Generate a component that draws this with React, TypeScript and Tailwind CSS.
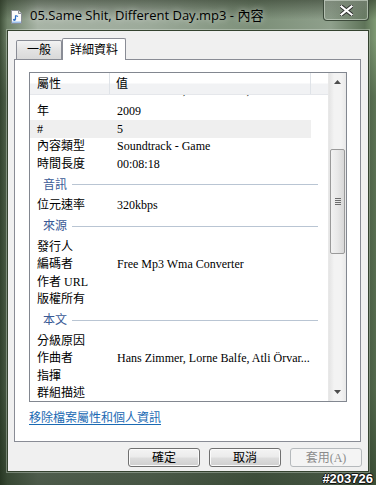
import React from 'react';

type Row = { label?: string; value?: string; section?: string; hl?: boolean; cut?: boolean };

const rows: Row[] = [
  { label: '參與演出者', value: 'Hans Zimmer, Lorne Balfe, Atli Örvar...', cut: true },
  { label: '年', value: '2009' },
  { label: '#', value: '5', hl: true },
  { label: '內容類型', value: 'Soundtrack - Game' },
  { label: '時間長度', value: '00:08:18' },
  { section: '音訊' },
  { label: '位元速率', value: '320kbps' },
  { section: '來源' },
  { label: '發行人' },
  { label: '編碼者', value: 'Free Mp3 Wma Converter' },
  { label: '作者 URL' },
  { label: '版權所有' },
  { section: '本文' },
  { label: '分級原因' },
  { label: '作曲者', value: 'Hans Zimmer, Lorne Balfe, Atli Örvar...' },
  { label: '指揮' },
  { label: '群組描述' },
];

const ui = "font-['Liberation_Serif','Noto_Sans_CJK_TC',serif]";

const FileIcon = () => (
  <svg width="11" height="14" viewBox="0 0 11 14">
    <path d="M0.5 0.5h7l3 3v10h-10z" fill="#fbfbfb" stroke="#8a8f96" />
    <path d="M7.5 0.5v3h3" fill="#e2e4e8" stroke="#8a8f96" />
    <path d="M4.5 5.5v4.2" stroke="#2d6fc4" strokeWidth="1.2" />
    <path d="M4.5 5.5l2.5 1" stroke="#2d6fc4" strokeWidth="1.2" />
    <ellipse cx="3.4" cy="9.8" rx="1.5" ry="1.1" fill="#2d6fc4" />
    <rect x="1" y="11.5" width="9" height="1.5" fill="#9cc0ea" />
  </svg>
);

const Button = ({ children, disabled }: { children: React.ReactNode; disabled?: boolean }) => (
  <div
    className={
      disabled
        ? 'w-[72px] h-[19px] rounded-[3px] border border-[#b5b9bc] bg-[#f4f4f4] flex items-center justify-center text-[12px] text-[#8b8b8b] leading-none'
        : 'w-[72px] h-[19px] rounded-[3px] border border-[#707070] bg-[linear-gradient(180deg,#f4f4f4_0%,#ebebeb_48%,#dddddd_52%,#cfcfcf_100%)] shadow-[inset_0_0_0_1px_#fbfbfb] flex items-center justify-center text-[12px] text-black leading-none'
    }
  >
    {children}
  </div>
);

const Scrollbar = () => (
  <div className="w-[18px] h-full flex flex-col bg-[linear-gradient(90deg,#e4e4e4,#f3f3f3_30%,#f3f3f3_70%,#e9e9e9)] border-l border-[#e8e8e8]">
    <div className="h-[18px] flex items-center justify-center">
      <svg width="7" height="4" viewBox="0 0 7 4"><path d="M0 4L3.5 0L7 4z" fill="#4d4d4d" /></svg>
    </div>
    <div className="h-[58px]" />
    <div className="h-[105px] mx-[1px] rounded-[2px] border border-[#9a9a9a] bg-[linear-gradient(90deg,#f2f2f2,#e8e8e8_50%,#d8d8d8)] flex flex-col items-center justify-center gap-[1px]">
      <div className="w-[6px] h-[1px] bg-[#6d6d6d]" />
      <div className="w-[6px] h-[1px] bg-[#6d6d6d]" />
      <div className="w-[6px] h-[1px] bg-[#6d6d6d]" />
      <div className="w-[6px] h-[1px] bg-[#6d6d6d]" />
    </div>
    <div className="flex-1" />
    <div className="h-[18px] flex items-center justify-center">
      <svg width="7" height="4" viewBox="0 0 7 4"><path d="M0 0L3.5 4L7 0z" fill="#4d4d4d" /></svg>
    </div>
  </div>
);

const ListView = () => (
  <div className="w-[318px] h-[330px] border border-[#828790] bg-white flex">
    <div className="w-[298px] flex flex-col overflow-hidden">
      <div className="h-[22px] shrink-0 flex bg-[linear-gradient(180deg,#ffffff_0%,#ffffff_48%,#f1f2f4_52%,#f1f2f4_100%)] border-b border-[#e5e7eb] text-[12px] text-black">
        <div className="w-[80px] pl-[7px] flex items-center border-r border-[#dfe3e8]">屬性</div>
        <div className="w-[201px] pl-[6px] flex items-center border-r border-[#dfe3e8]">值</div>
        <div className="flex-1" />
      </div>
      <div className="flex-1 overflow-hidden">
        <div className="-mt-[10px] flex flex-col">
          {rows.map((r, i) =>
            r.section ? (
              <div key={i} className="h-[24px] flex items-center pl-[13px] pr-[10px] gap-[5px]">
                <span className="text-[12px] text-[#3a5a96] leading-none">{r.section}</span>
                <div className="flex-1 h-[1px] bg-[#b9c5d3]" />
              </div>
            ) : (
              <div
                key={i}
                className={`h-[17.5px] w-[281px] flex text-[12px] text-black leading-none ${r.cut ? 'items-start' : 'items-center'} ${r.hl ? 'bg-[#efefef]' : ''}`}
              >
                <div className={`w-[80px] pl-[7px] whitespace-nowrap ${r.cut ? '-mt-[1px]' : ''}`}>{r.label}</div>
                <div className={`pl-[7px] whitespace-nowrap ${r.cut ? '-mt-[1px]' : ''}`}>{r.value}</div>
              </div>
            )
          )}
        </div>
      </div>
    </div>
    <Scrollbar />
  </div>
);

export default function App() {
  return (
    <div
      className={`w-[376px] h-[485px] relative overflow-hidden flex flex-col ${ui} bg-[linear-gradient(90deg,#3f5039_0%,#6f8269_2%,#a8b4a6_10%,#9caa9a_40%,#7c8f78_68%,#8fa08c_88%,#5f7459_97%,#7f9a73_100%)]`}
    >
      <div className="absolute inset-0 bg-[linear-gradient(180deg,rgba(40,50,35,0.55)_0%,rgba(140,155,138,0)_4%,rgba(0,0,0,0)_8%,rgba(30,45,28,0.35)_20%,rgba(30,45,28,0.45)_80%,rgba(25,40,22,0.65)_100%)]" />
      {/* title bar */}
      <div className="h-[30px] shrink-0 flex items-start relative">
        <div className="pl-[11px] pt-[10px]">
          <FileIcon />
        </div>
        <div className="pl-[8px] pt-[7px] text-[13px] text-black font-['Open_Sans','Noto_Sans_CJK_TC',sans-serif] leading-[16px] [text-shadow:0_0_6px_rgba(255,255,255,0.7)]">
          05.Same Shit, Different Day.mp3 - 內容
        </div>
        <div className="flex-1" />
        <div className="w-[46px] h-[21px] mr-[7px] rounded-b-[4px] border border-t-0 border-[#3c4a3a] shadow-[inset_0_0_0_1px_rgba(220,230,218,0.55)] bg-[linear-gradient(180deg,rgba(200,210,198,0.35),rgba(120,135,118,0.3))] flex items-center justify-center">
          <svg width="13" height="11" viewBox="0 0 13 11">
            <path d="M1.5 1.5L11.5 9.5M11.5 1.5L1.5 9.5" stroke="#2b2b2b" strokeWidth="4" strokeLinecap="square" />
            <path d="M1.5 1.5L11.5 9.5M11.5 1.5L1.5 9.5" stroke="#ffffff" strokeWidth="2.2" strokeLinecap="square" />
          </svg>
        </div>
      </div>

      {/* client area */}
      <div className="mx-[7px] h-[442px] border border-[#34422f] bg-[#f0f0f0] shadow-[0_0_0_1px_rgba(230,238,228,0.35)] flex flex-col relative">
        <div className="pt-[6px] pl-[8px] flex items-end h-[28px]">
          <div className="w-[46px] h-[19px] border border-b-0 border-[#898c95] rounded-t-[2px] bg-[linear-gradient(180deg,#f3f3f3,#e3e3e3_50%,#d9d9d9)] flex items-center justify-center text-[12px] leading-none">
            一般
          </div>
          <div className="w-[64px] h-[22px] -mb-[1px] border border-b-0 border-[#898c95] rounded-t-[2px] bg-white flex items-center justify-center text-[12px] leading-none relative z-10">
            詳細資料
          </div>
        </div>
        <div className="ml-[6px] w-[347px] h-[383px] border border-[#898c95] bg-white flex flex-col px-[14px] pt-[12px]">
          <ListView />
          <div className="pt-[8px] text-[12px] leading-[16px] text-[#1a6ab3] underline underline-offset-[2px]">
            移除檔案屬性和個人資訊
          </div>
        </div>
        <div className="flex justify-end gap-[9px] pr-[6px] pt-[6px]">
          <Button>確定</Button>
          <Button>取消</Button>
          <Button disabled>套用(A)</Button>
        </div>
      </div>

      <div className="absolute right-[3px] bottom-[0px] text-[13px] leading-[13px] font-bold text-white font-['Liberation_Sans',sans-serif] [text-shadow:1px_0_0_#111,-1px_0_0_#111,0_1px_0_#111,0_-1px_0_#111]">
        #203726
      </div>
    </div>
  );
}
